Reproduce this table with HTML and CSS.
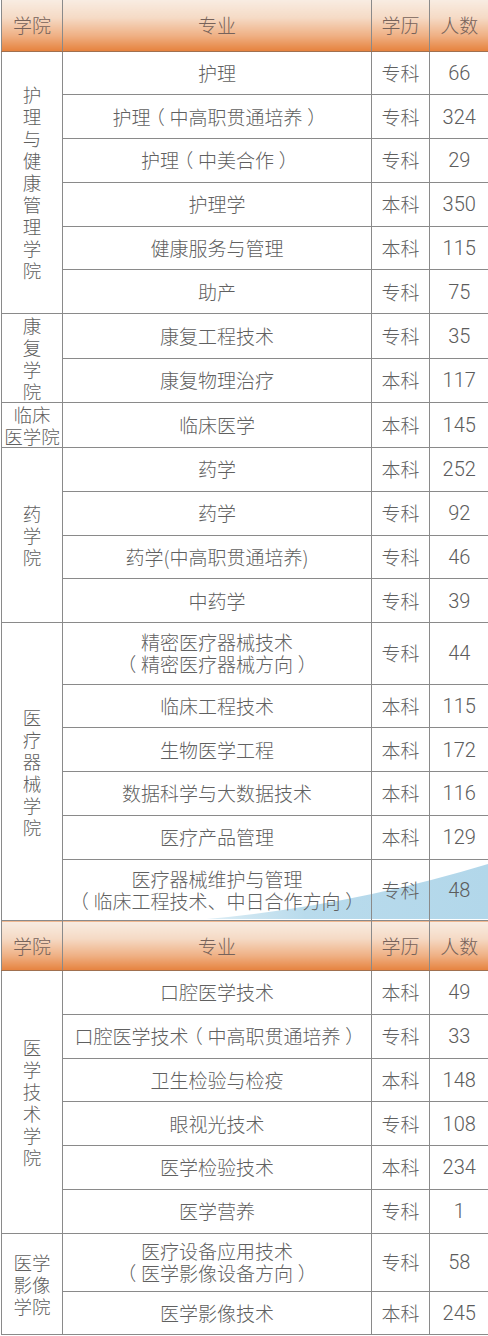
FILE: index.html
```html
<!DOCTYPE html>
<html lang="zh-CN">
<head>
<meta charset="utf-8">
<link rel="stylesheet" href="styles.css">
</head>
<body>
<div class="wrap">
<svg class="wedge" width="288" height="60" viewBox="0 0 288 60" aria-hidden="true">
  <defs>
    <linearGradient id="wg" x1="0" y1="0" x2="1" y2="0">
      <stop offset="0" stop-color="#dcedf5"/>
      <stop offset="0.35" stop-color="#b9dbec"/>
      <stop offset="1" stop-color="#b2d7ea"/>
    </linearGradient>
  </defs>
  <path d="M7,59 Q150,46 288,4 L288,59 Z" fill="url(#wg)"/>
</svg>
<table class="tbl">
  <colgroup>
    <col class="c1"><col class="c2"><col class="c3"><col class="c4">
  </colgroup>
  <tr class="head h1"><th>学院</th><th>专业</th><th>学历</th><th>人数</th></tr>

  <tr class="r"><td class="col" rowspan="6">护<br>理<br>与<br>健<br>康<br>管<br>理<br>学<br>院</td><td>护理</td><td>专科</td><td class="num">66</td></tr>
  <tr class="r"><td>护理<span class="pp">（</span>中高职贯通培养<span class="pp">）</span></td><td>专科</td><td class="num">324</td></tr>
  <tr class="r"><td>护理<span class="pp">（</span>中美合作<span class="pp">）</span></td><td>专科</td><td class="num">29</td></tr>
  <tr class="r"><td>护理学</td><td>本科</td><td class="num">350</td></tr>
  <tr class="r"><td>健康服务与管理</td><td>本科</td><td class="num">115</td></tr>
  <tr class="r"><td>助产</td><td>专科</td><td class="num">75</td></tr>

  <tr class="r"><td class="col" rowspan="2">康<br>复<br>学<br>院</td><td>康复工程技术</td><td>专科</td><td class="num">35</td></tr>
  <tr class="r"><td>康复物理治疗</td><td>本科</td><td class="num">117</td></tr>

  <tr class="r"><td class="col tight">临床<br>医学院</td><td>临床医学</td><td>本科</td><td class="num">145</td></tr>

  <tr class="r"><td class="col" rowspan="4">药<br>学<br>院</td><td>药学</td><td>本科</td><td class="num">252</td></tr>
  <tr class="r"><td>药学</td><td>专科</td><td class="num">92</td></tr>
  <tr class="r"><td>药学(中高职贯通培养)</td><td>专科</td><td class="num">46</td></tr>
  <tr class="r"><td>中药学</td><td>专科</td><td class="num">39</td></tr>

  <tr class="d"><td class="col" rowspan="6">医<br>疗<br>器<br>械<br>学<br>院</td><td class="two">精密医疗器械技术<br><span class="pp">（</span>精密医疗器械方向<span class="pp">）</span></td><td>专科</td><td class="num">44</td></tr>
  <tr class="r"><td>临床工程技术</td><td>本科</td><td class="num">115</td></tr>
  <tr class="r"><td>生物医学工程</td><td>本科</td><td class="num">172</td></tr>
  <tr class="r"><td>数据科学与大数据技术</td><td>本科</td><td class="num">116</td></tr>
  <tr class="r"><td>医疗产品管理</td><td>本科</td><td class="num">129</td></tr>
  <tr class="d"><td class="two">医疗器械维护与管理<br><span class="pp">（</span>临床工程技术、中日合作方向<span class="pp">）</span></td><td>专科</td><td class="num">48</td></tr>

  <tr class="head h2"><th>学院</th><th>专业</th><th>学历</th><th>人数</th></tr>

  <tr class="r"><td class="col" rowspan="6">医<br>学<br>技<br>术<br>学<br>院</td><td>口腔医学技术</td><td>本科</td><td class="num">49</td></tr>
  <tr class="r"><td>口腔医学技术<span class="pp">（</span>中高职贯通培养<span class="pp">）</span></td><td>专科</td><td class="num">33</td></tr>
  <tr class="r"><td>卫生检验与检疫</td><td>本科</td><td class="num">148</td></tr>
  <tr class="r"><td>眼视光技术</td><td>专科</td><td class="num">108</td></tr>
  <tr class="r"><td>医学检验技术</td><td>本科</td><td class="num">234</td></tr>
  <tr class="r"><td>医学营养</td><td>专科</td><td class="num">1</td></tr>

  <tr class="d2"><td class="col" rowspan="2">医学<br>影像<br>学院</td><td class="two">医疗设备应用技术<br><span class="pp">（</span>医学影像设备方向<span class="pp">）</span></td><td>专科</td><td class="num">58</td></tr>
  <tr class="rl"><td>医学影像技术</td><td>本科</td><td class="num">245</td></tr>
</table>
</div>
</body>
</html>
```
FILE: styles.css
```css
html, body {
  margin: 0;
  padding: 0;
  background: #ffffff;
}

.wrap {
  position: relative;
  z-index: 0;
  width: 488px;
  padding-left: 1px;
  box-sizing: border-box;
}

.wedge {
  position: absolute;
  left: 200px;
  top: 860px;
  z-index: -1;
}

.tbl {
  width: 487px;
  border-collapse: collapse;
  table-layout: fixed;
  font-family: "Noto Sans CJK SC", "Noto Sans", sans-serif;
  font-weight: 300;
  color: #606060;
  font-size: 19px;
}

.c1 { width: 61px; }
.c2 { width: 309px; }
.c3 { width: 58px; }
.c4 { width: 59px; }

.tbl td,
.tbl th {
  border: 1px solid #8a8a8a;
  text-align: center;
  vertical-align: middle;
  padding: 0;
  line-height: 22px;
}

.tbl tr > :last-child {
  border-right: none;
}

.head th {
  font-weight: 300;
  color: #76625a;
  background: linear-gradient(to bottom, #f8ece2 0%, #f5dac5 35%, #efb084 70%, #e6823e 100%);
  border-top: none;
  border-bottom: 1px solid #a0704f;
}

.h1 { height: 51px; }
.h2 { height: 50px; }
.r { height: 43.75px; }
.rl { height: 43.3px; }
.d { height: 61.5px; }
.d2 { height: 58px; }

.pp {
  font-feature-settings: "halt" 1;
  padding: 0 0.25em;
}

.col {
  line-height: 22.5px;
  font-size: 18.5px;
}

.tight {
  line-height: 20px;
}

.two {
  line-height: 23px;
}

.num {
  font-family: Roboto, "Liberation Sans", sans-serif;
  font-weight: 300;
  font-size: 20px;
  color: #5c5c5c;
}
```
